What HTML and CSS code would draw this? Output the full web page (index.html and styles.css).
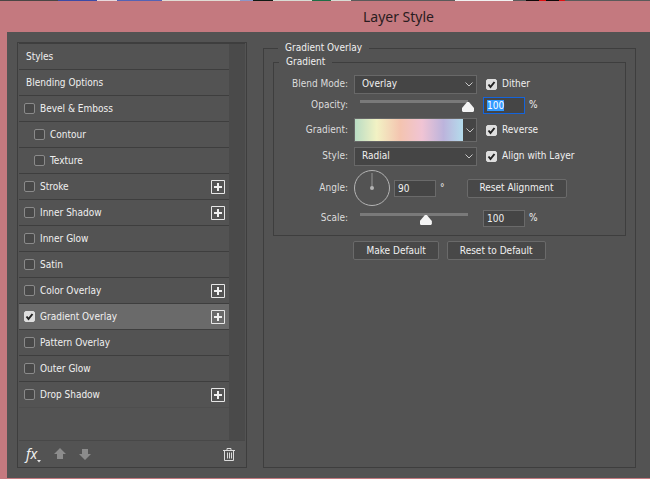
FILE: index.html
```html
<!DOCTYPE html>
<html lang="en">
<head>
    <meta charset="UTF-8">
    <title>Layer Style</title>
    <link rel="stylesheet" href="styles.css">
</head>
<body>
<svg class="hidden">
    <symbol id="plus" viewBox="0 0 14 14">
        <path d="M.5 .5h13v13h-13z" fill="none" stroke="#e6e6e6"/>
        <path d="M3 6h3V3h2v3h3v2H8v3H6V8H3z" fill="#f0f0f0"/>
    </symbol>
</svg>
<div class="strip"></div>
<h1 class="title">Layer Style</h1>
<div class="dialog">
    <div class="side">
        <div class="list-wrap">
            <ul class="list">
                <li class="head"><a href="#">Styles</a></li>
                <li class="head"><a href="#">Blending Options</a></li>
                <li><label><input type="checkbox">Bevel &amp; Emboss</label></li>
                <li class="sub"><label><input type="checkbox">Contour</label></li>
                <li class="sub"><label><input type="checkbox">Texture</label></li>
                <li><label><input type="checkbox">Stroke</label>
                    <button class="add" type="button" aria-label="Add Stroke"><svg><use href="#plus"/></svg></button></li>
                <li><label><input type="checkbox">Inner Shadow</label>
                    <button class="add" type="button" aria-label="Add Inner Shadow"><svg><use href="#plus"/></svg></button></li>
                <li><label><input type="checkbox">Inner Glow</label></li>
                <li><label><input type="checkbox">Satin</label></li>
                <li><label><input type="checkbox">Color Overlay</label>
                    <button class="add" type="button" aria-label="Add Color Overlay"><svg><use href="#plus"/></svg></button></li>
                <li class="on"><label><input type="checkbox" checked>Gradient Overlay</label>
                    <button class="add" type="button" aria-label="Add Gradient Overlay"><svg><use href="#plus"/></svg></button></li>
                <li><label><input type="checkbox">Pattern Overlay</label></li>
                <li><label><input type="checkbox">Outer Glow</label></li>
                <li><label><input type="checkbox">Drop Shadow</label>
                    <button class="add" type="button" aria-label="Add Drop Shadow"><svg><use href="#plus"/></svg></button></li>
            </ul>
            <div class="scroll"></div>
        </div>
        <div class="tools">
            <button class="fx" type="button">fx<svg width="4" height="3" viewBox="0 0 4 3"><path d="M0 0h4L2 2.5z" fill="#e6e6e6"/></svg></button>
            <button type="button" aria-label="Move up"><svg width="12" height="12" viewBox="0 0 12 12"><path d="M6 0l6 6H9v5H3V6H0z" fill="#8c8c8c"/></svg></button>
            <button type="button" aria-label="Move down"><svg width="12" height="12" viewBox="0 0 12 12"><path d="M6 12l6-6H9V1H3v5H0z" fill="#8c8c8c"/></svg></button>
            <button class="trash" type="button" aria-label="Delete"><svg width="12" height="13" viewBox="0 0 12 13"><path d="M0 2.5h12M4 2.5v-2h4v2M1.5 3v9.500h9V3M4.500 4.500v6M6.500 4.500v6M8.500 4.500v6" fill="none" stroke="#dcdcdc"/></svg></button>
        </div>
    </div>

    <fieldset class="main">
        <legend>Gradient Overlay</legend>
        <fieldset class="box">
            <legend>Gradient</legend>
            <div class="grid">
                <label class="name" for="blend">Blend Mode:</label>
                <select id="blend"><option>Overlay</option></select>
                <label class="check"><input type="checkbox" checked>Dither</label>

                <label class="name" for="opacity">Opacity:</label>
                <input type="range" aria-label="Opacity slider" min="0" max="100" value="100">
                <div class="field"><input id="opacity" class="num" type="text" value="100">%</div>

                <label class="name" for="gradient">Gradient:</label>
                <div class="gradient">
                    <button id="gradient" class="swatch" type="button"></button>
                    <button class="pick" type="button" aria-label="Gradient presets"><svg width="8" height="5" viewBox="0 0 8 5"><path d="M.5 .5L4 4L7.500 .5" fill="none" stroke="#c8c8c8"/></svg></button>
                </div>
                <label class="check"><input type="checkbox" checked>Reverse</label>

                <label class="name" for="style">Style:</label>
                <select id="style"><option>Radial</option></select>
                <label class="check"><input type="checkbox" checked>Align with Layer</label>

                <label class="name" for="angle">Angle:</label>
                <div class="angle">
                    <svg width="36" height="36" viewBox="0 0 36 36">
                        <circle cx="18" cy="18" r="17.500" fill="none" stroke="#b4b4b4"/>
                        <path d="M18 3v15" stroke="#969696"/>
                        <circle cx="18" cy="18" r="2" fill="#b4b4b4"/>
                    </svg>
                    <input id="angle" class="num" type="text" value="90">°
                    <button class="btn" type="button">Reset Alignment</button>
                </div>

                <label class="name" for="scale">Scale:</label>
                <input type="range" aria-label="Scale slider" min="0" max="100" value="61">
                <div class="field"><input id="scale" class="num" type="text" value="100">%</div>
            </div>
        </fieldset>
        <div class="btns">
            <button class="btn" type="button">Make Default</button>
            <button class="btn" type="button">Reset to Default</button>
        </div>
    </fieldset>
</div>
<script>
    var opacity = document.getElementById('opacity');
    opacity.focus();
    opacity.select();
</script>
</body>
</html>
```
FILE: styles.css
```css
* {
    box-sizing: border-box;
}

body {
    display: flex;
    flex-direction: column;
    min-height: 100vh;
    margin: 0;
    padding-bottom: 1px;
    background-color: #c4797f;
    color: #f0f0f0;
    font: 10px/14px "DejaVu Sans Condensed", "DejaVu Sans", sans-serif;
}

button, input, select {
    margin: 0;
    padding: 0;
    font: inherit;
    color: inherit;
}

button {
    border: none;
    background: none;
}

svg {
    display: block;
}

.hidden {
    display: none;
}

/* what shows of the document above the dialog */
.strip {
    height: 1px;
    background: linear-gradient(to right, #4a4644 9%, #3c4aa6 9% 15%, #e8d8dc 15% 18%, #5563b4 18% 25%, #e0dcd4 25% 37%, #8c96c8 37% 39%, #101a14 39% 42%, #d8dcd4 42% 48%, #1e6e46 48% 51%, #d8dcd4 51% 54%, #5a5a5a 54% 70%, #f0f0f0 70% 79%, #5a5a5a 79% 81%, #100808 81% 83%, #e01010 83% 84%, #100808 84% 86%, #e01010 86% 87%, #5a5a5a 87%);
}

.title {
    margin: 0;
    padding-left: 147px;
    height: 31px;
    font: 14px/32px "Noto Sans", sans-serif;
    text-align: center;
    color: #2a1c20;
}

.dialog {
    display: flex;
    flex: 1;
    gap: 16px;
    margin-left: 7px;
    padding: 9px 14px 10px 10px;
    background-color: #535353;
}

/* left list */
.side {
    display: flex;
    flex-direction: column;
    width: 230px;
    margin-top: 1px;
    border: 1px solid #3e3e3e;
}

.list-wrap {
    display: flex;
    flex: 1;
    margin: 0 1px;
    border-top: 1px solid #3e3e3e;
    border-bottom: 1px solid #484848;
}

.list {
    flex: 1;
    margin: 0;
    padding: 0;
    list-style: none;
}

.list li {
    display: flex;
    align-items: center;
    height: 26px;
    padding: 0 4px 0 5px;
    border-bottom: 1px solid #3e3e3e;
}

.list li:last-child {
    border-bottom-color: #4e4e4e;
}

.list .head {
    padding-left: 7px;
}

.list .sub {
    padding-left: 15px;
}

.list .on {
    background-color: #6a6a6a;
}

.list a {
    color: inherit;
    text-decoration: none;
}

.list label, .check {
    display: flex;
    flex: 1;
    align-items: center;
    gap: 5px;
}

.add svg {
    width: 14px;
    height: 14px;
}

.scroll {
    width: 16px;
    background-color: #4a4a4a;
}

.tools {
    display: flex;
    align-items: center;
    gap: 13px;
    height: 26px;
    padding: 0 11px 0 8px;
}

.fx {
    display: flex;
    align-items: flex-end;
    font: italic 14px/18px "Noto Sans", sans-serif;
}

.trash {
    margin-left: auto;
}

input[type=checkbox] {
    appearance: none;
    width: 11px;
    height: 11px;
    border: 1px solid #8a8a8a;
    border-radius: 2px;
    background-color: #484848;
}

input[type=checkbox]:checked {
    border-color: #dedede;
    background: #dedede url("data:image/svg+xml,%3Csvg xmlns='http://www.w3.org/2000/svg' viewBox='0 0 9 9'%3E%3Cpath d='M1.500 4.500l2 2.500l4-5' fill='none' stroke='%23222' stroke-width='2'/%3E%3C/svg%3E");
}

/* right side */
fieldset {
    min-width: 0;
    margin: 0;
    border: 1px solid #3e3e3e;
}

legend {
    margin-left: 5px;
    padding: 0 7px;
}

.main {
    flex: 1;
    padding: 0 9px;
}

.box {
    padding: 5px 0 7px;
}

.grid {
    display: grid;
    grid-template-columns: 74px 123px 1fr;
    grid-template-rows: 20px 22px 28px 24px 40px 20px;
    column-gap: 6px;
    align-items: center;
}

.name {
    text-align: right;
    color: #dcdcdc;
}

select {
    appearance: none;
    height: 19px;
    padding-left: 7px;
    border: 1px solid #686868;
    border-radius: 0;
    background: #454545 url("data:image/svg+xml,%3Csvg xmlns='http://www.w3.org/2000/svg' width='8' height='5'%3E%3Cpath d='M.5 .5L4 4L7.500 .5' fill='none' stroke='%23c8c8c8'/%3E%3C/svg%3E") no-repeat right 3px center;
}

.check {
    padding-left: 3px;
}

.field {
    display: flex;
    align-items: center;
    gap: 4px;
}

.num {
    width: 42px;
    height: 17px;
    padding-left: 3px;
    border: 1px solid #6a6a6a;
    background-color: #454545;
}

.num:focus {
    outline: none;
    border-color: #1464dc;
}

.num::selection {
    background-color: #3399ff;
    color: #fff;
}

input[type=range] {
    appearance: none;
    height: 14px;
    margin-right: 3px;
    background: linear-gradient(#7a7a7a, #7a7a7a) no-repeat center 2px / calc(100% - 12px) 3px;
}

input[type=range]::-webkit-slider-thumb {
    appearance: none;
    width: 12px;
    height: 10px;
    margin-top: 4px;
    background-color: #f4f4f4;
    clip-path: polygon(42% 0, 58% 0, 100% 60%, 100% 90%, 92% 100%, 8% 100%, 0 90%, 0 60%);
}

.gradient {
    display: flex;
    height: 24px;
    border: 1px solid #686868;
}

.swatch {
    flex: 1;
    background: linear-gradient(to right, #b9dcc4, #f2f2c4 20%, #f4c4b0 42%, #f0c4d4 62%, #bcb4dc 82%, #b4dcec);
}

.pick {
    width: 13px;
    padding-left: 3px;
    background-color: #454545;
}

.angle {
    display: flex;
    grid-column: span 2;
    align-items: center;
    gap: 4px;
}

.angle .btn {
    margin-left: 18px;
}

.btn {
    height: 19px;
    padding: 0 12px;
    border: 1px solid #6a6a6a;
    border-radius: 2px;
    background-color: #484848;
}

.btns {
    display: flex;
    justify-content: center;
    gap: 8px;
    padding-top: 5px;
}
```
